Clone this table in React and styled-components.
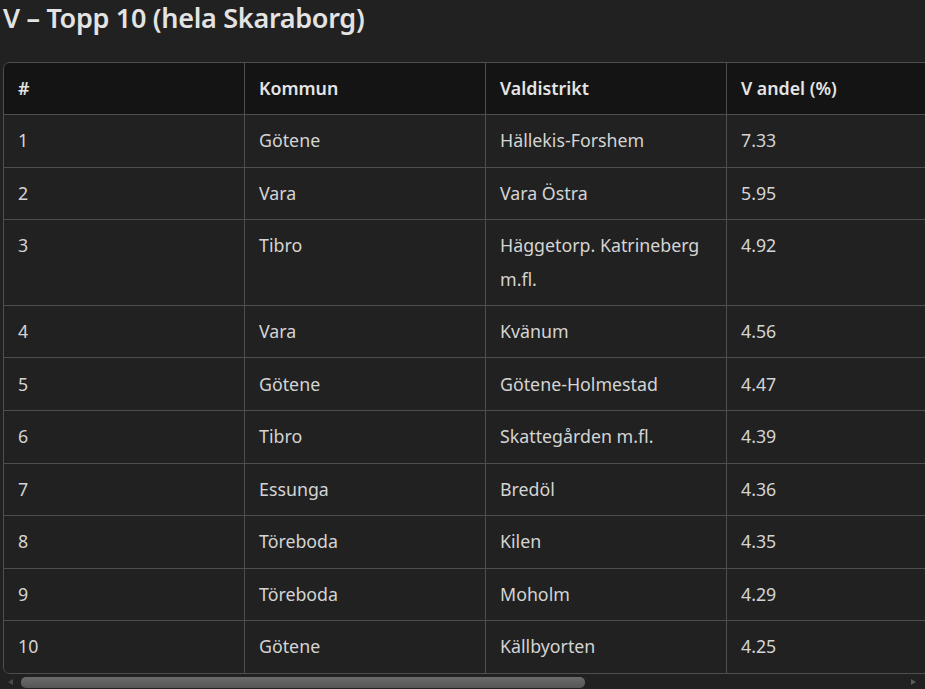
import React from 'react'
import styled, { createGlobalStyle } from 'styled-components'

const font = `font-family: 'Segoe UI', 'Noto Sans', 'Open Sans', sans-serif`
const bg = '#212121'
const linje = '#4e4e4e'

const GlobalStyle = createGlobalStyle`
  html, body {
    margin: 0;
    padding: 0;
    background: ${bg};
    overflow: hidden;
  }
  body {
    ${font};
    color: #d6d6d6;
  }
`

const Page = styled.div`
  padding: 0 0 0 3px;
  height: 689px;
  box-sizing: border-box;
`

const Titel = styled.h2`
  margin: 0 0 26px 0;
  font-size: 27px;
  line-height: 36px;
  font-weight: 600;
  color: #e3e3e3;
  letter-spacing: -0.3px;
`

const Ram = styled.div`
  width: 922px;
  overflow: hidden;
`

const Tabell = styled.table`
  width: 1457px;
  table-layout: fixed;
  border-collapse: separate;
  border-spacing: 0;
  border: 1px solid ${linje};
  border-radius: 7px;
  overflow: hidden;
  font-size: 17.8px;
`

const Kol = styled.col`
  width: ${p => p.$w ? p.$w + 'px' : 'auto'};
`

const Rubrik = styled.th`
  background: #141414;
  color: #e4e4e4;
  font-weight: 600;
  text-align: left;
  padding: 9px 15px 9px 14px;
  line-height: 33px;
  border-right: 1px solid ${linje};
  border-bottom: 1px solid ${linje};
  &:last-child { border-right: none; }
`

const Rad = styled.tr`
  &:last-child td { border-bottom: none; }
`

const Cell = styled.td`
  background: ${bg};
  color: #d4d4d4;
  vertical-align: top;
  padding: 9.13px 15px 9.13px 14px;
  line-height: 33.3px;
  border-right: 1px solid ${linje};
  border-bottom: 1px solid ${linje};
  &:last-child { border-right: none; }
`

const Rullning = styled.div`
  display: flex;
  align-items: center;
  width: 922px;
  height: 15px;
  margin-top: 1px;
  margin-left: -3px;
  box-sizing: border-box;
  padding: 0 6px 0 8px;
`

const Pil = styled.div`
  width: 0;
  height: 0;
  border-top: 3.5px solid transparent;
  border-bottom: 3.5px solid transparent;
  ${p => p.$hoger
    ? `border-left: 5px solid #5a5a5a; margin-left: auto;`
    : `border-right: 5px solid #4a4a4a;`}
`

const Tumme = styled.div`
  width: 564px;
  height: 11px;
  margin-left: 8px;
  border-radius: 5px;
  background: linear-gradient(#6b6b6b, #555555);
`

const rader = [
  ['1', 'Götene', 'Hällekis-Forshem', '7.33'],
  ['2', 'Vara', 'Vara Östra', '5.95'],
  ['3', 'Tibro', 'Häggetorp. Katrineberg m.fl.', '4.92'],
  ['4', 'Vara', 'Kvänum', '4.56'],
  ['5', 'Götene', 'Götene-Holmestad', '4.47'],
  ['6', 'Tibro', 'Skattegården m.fl.', '4.39'],
  ['7', 'Essunga', 'Bredöl', '4.36'],
  ['8', 'Töreboda', 'Kilen', '4.35'],
  ['9', 'Töreboda', 'Moholm', '4.29'],
  ['10', 'Götene', 'Källbyorten', '4.25'],
]

export default function App() {
  return (
    <Page>
      <GlobalStyle />
      <Titel>V – Topp 10 (hela Skaraborg)</Titel>
      <Ram>
        <Tabell>
          <colgroup>
            <Kol $w={241} />
            <Kol $w={241} />
            <Kol $w={241} />
            <Kol />
          </colgroup>
          <thead>
            <tr>
              <Rubrik>#</Rubrik>
              <Rubrik>Kommun</Rubrik>
              <Rubrik>Valdistrikt</Rubrik>
              <Rubrik>V andel (%)</Rubrik>
            </tr>
          </thead>
          <tbody>
            {rader.map(r => (
              <Rad key={r[0]}>
                {r.map((c, i) => <Cell key={i}>{c}</Cell>)}
              </Rad>
            ))}
          </tbody>
        </Tabell>
      </Ram>
      <Rullning>
        <Pil />
        <Tumme />
        <Pil $hoger />
      </Rullning>
    </Page>
  )
}
